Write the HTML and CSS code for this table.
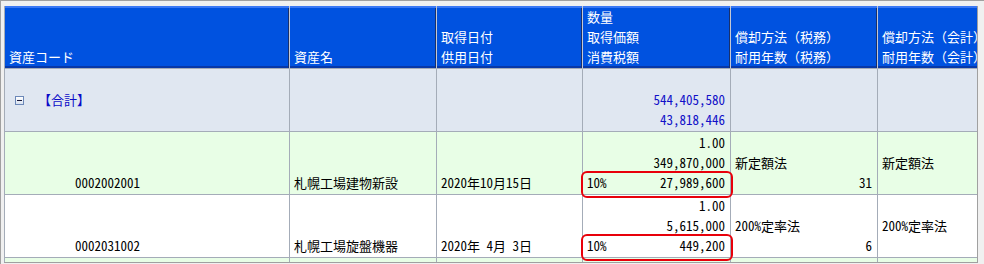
FILE: index.html
```html
<!DOCTYPE html>
<html lang="ja">
<head>
<meta charset="utf-8">
<link rel="stylesheet" href="styles.css">
</head>
<body>
<div class="frame">
  <div class="grid">
    <div class="cell head"><div class="ln">資産コード</div></div>
    <div class="cell head"><div class="ln">資産名</div></div>
    <div class="cell head"><div class="ln">取得日付</div><div class="ln">供用日付</div></div>
    <div class="cell head"><div class="ln">数量</div><div class="ln">取得価額</div><div class="ln">消費税額</div></div>
    <div class="cell head"><div class="ln">償却方法<span class="fw">（税務）</span></div><div class="ln">耐用年数<span class="fw">（税務）</span></div></div>
    <div class="cell head last"><div class="ln">償却方法<span class="fw">（会計）</span></div><div class="ln">耐用年数<span class="fw">（会計）</span></div></div>

    <div class="cell total"><div class="ln sum"><span class="minus"></span><span class="sumlabel">【合計】</span></div><div class="ln"></div></div>
    <div class="cell total"></div>
    <div class="cell total"></div>
    <div class="cell total"><div class="ln r">544,405,580</div><div class="ln r">43,818,446</div></div>
    <div class="cell total"></div>
    <div class="cell total last"></div>

    <div class="cell green"><div class="ln code">0002002001</div></div>
    <div class="cell green"><div class="ln">札幌工場建物新設</div></div>
    <div class="cell green"><div class="ln">2020年10月15日</div></div>
    <div class="cell green qty"><div class="ln r">1.00</div><div class="ln r">349,870,000</div><div class="ln split mark"><span>10%</span><span>27,989,600</span></div></div>
    <div class="cell green"><div class="ln">新定額法</div><div class="ln r">31</div></div>
    <div class="cell green last"><div class="ln">新定額法</div><div class="ln"></div></div>

    <div class="cell white"><div class="ln code">0002031002</div></div>
    <div class="cell white"><div class="ln">札幌工場旋盤機器</div></div>
    <div class="cell white"><div class="ln pre">2020年 4月 3日</div></div>
    <div class="cell white qty"><div class="ln r">1.00</div><div class="ln r">5,615,000</div><div class="ln split mark"><span>10%</span><span>449,200</span></div></div>
    <div class="cell white"><div class="ln">200%定率法</div><div class="ln r">6</div></div>
    <div class="cell white last"><div class="ln">200%定率法</div><div class="ln"></div></div>

    <div class="cell green stub"></div>
    <div class="cell green stub"></div>
    <div class="cell green stub"></div>
    <div class="cell green stub"></div>
    <div class="cell green stub"></div>
    <div class="cell green stub last"></div>
  </div>
</div>
</body>
</html>
```

FILE: styles.css
```css
html, body {
  margin: 0;
  padding: 0;
  background: #f0f0f0;
}
.frame {
  width: 984px;
  height: 264px;
  box-sizing: border-box;
  border-top: 1px solid #a0a0a0;
  border-left: 1px solid #a0a0a0;
  background: #f0f0f0;
  padding: 5px 6px 0 3px;
  overflow: hidden;
  font-family: "Noto Sans CJK JP", sans-serif;
  font-feature-settings: "hwid" 1;
  font-size: 13px;
  color: #000;
}
.grid {
  display: grid;
  grid-template-columns: 286px 147px 146px 148px 147px 99px;
  grid-template-rows: 63px 63px 63px 63px 4px;
  width: 973px;
  border-right: 1px solid #a0a0a0;
  border-bottom: 1px solid #a0a0a0;
  overflow: hidden;
}
.cell {
  box-sizing: border-box;
  border-right: 1px solid #a4acb8;
  border-bottom: 1px solid #a4acb8;
  display: flex;
  flex-direction: column;
  justify-content: flex-end;
  padding-bottom: 1px;
  overflow: hidden;
  min-width: 0;
}
.grid > .cell:nth-child(6n+1) {
  border-left: 1px solid #a4acb8;
}
.last {
  border-right: none;
}
.qty {
  overflow: visible;
}
.fw {
  font-feature-settings: normal;
}
.ln {
  height: 20px;
  line-height: 20px;
  padding: 0 5px 0 4px;
  white-space: nowrap;
  position: relative;
}
.r {
  text-align: right;
}
.pre {
  white-space: pre;
}
.split {
  display: flex;
  justify-content: space-between;
}
.head {
  background: #0052e0;
  color: #fff;
  border-right: 1px solid #c4c8d4;
  border-bottom: 1px solid #a4acb8;
  box-shadow: inset 0 2px 0 #3a78f4, inset -1px 0 0 #18306c, inset 0 -2px 0 #0838a8;
}
.head.last {
  border-right: none;
  box-shadow: inset 0 2px 0 #3a78f4, inset 0 -2px 0 #0838a8;
}
.total {
  background: #e0e7f1;
  color: #1010c8;
}
.green {
  background: #e8fee6;
}
.white {
  background: #ffffff;
}
.stub {
  border-bottom: none;
  padding: 0;
}
.code {
  padding-left: 70px;
}
.sum {
  display: flex;
  align-items: center;
  padding-left: 10px;
}
.minus {
  width: 7px;
  height: 7px;
  border: 1px solid #6c88b8;
  background: linear-gradient(#ffffff, #d8e2f0);
  position: relative;
  margin-right: 14px;
}
.minus::after {
  content: "";
  position: absolute;
  left: 1px;
  right: 1px;
  top: 3px;
  height: 1px;
  background: #1a1a3a;
}
.sumlabel {
  color: #0a0ac8;
}
.mark::after {
  content: "";
  position: absolute;
  left: -2px;
  right: -3px;
  top: -2px;
  bottom: -5px;
  border: 2px solid #e8000a;
  border-radius: 6px;
  z-index: 2;
}
```
